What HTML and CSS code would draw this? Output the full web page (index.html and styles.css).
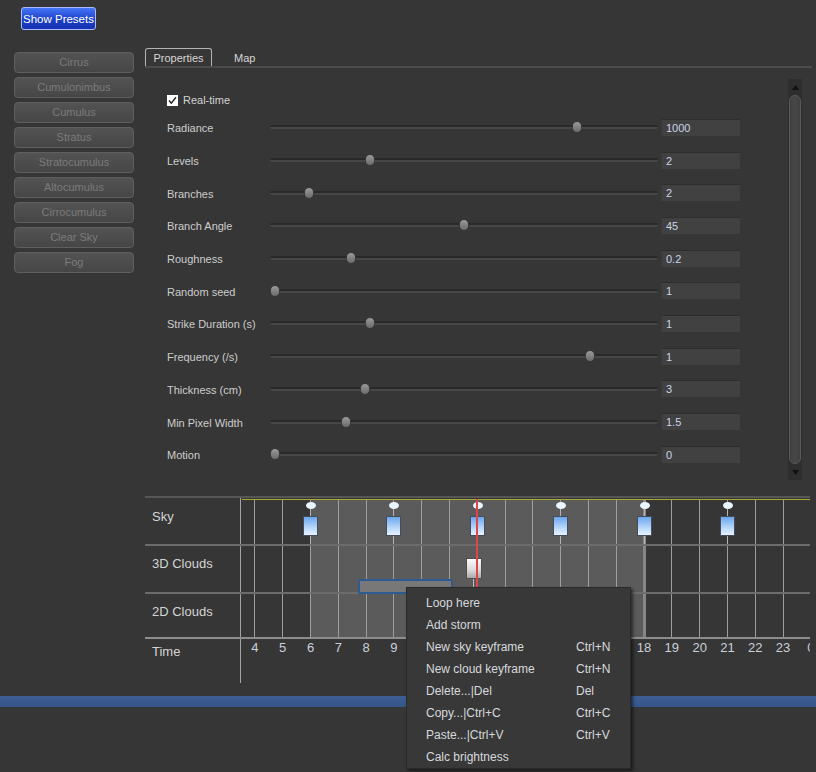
FILE: index.html
```html
<!DOCTYPE html>
<html>
<head>
<meta charset="utf-8">
<link rel="stylesheet" href="styles.css">
</head>
<body>
<div class="top"><button class="presets">Show Presets</button></div>
<div class="main">
  <div class="sidebar">
    <div class="preset">Cirrus</div>
    <div class="preset">Cumulonimbus</div>
    <div class="preset">Cumulus</div>
    <div class="preset">Stratus</div>
    <div class="preset">Stratocumulus</div>
    <div class="preset">Altocumulus</div>
    <div class="preset">Cirrocumulus</div>
    <div class="preset">Clear Sky</div>
    <div class="preset">Fog</div>
  </div>
  <div class="panel">
    <div class="tabs"><div class="tab active">Properties</div><div class="tab">Map</div></div>
    <div class="body">
      <div class="form">
        <div class="check-row"><span class="checkbox"><svg width="11" height="11" viewBox="0 0 11 11"><path d="M2 5.5 L4.3 8.2 L9 2.2" fill="none" stroke="#222" stroke-width="1.4"/></svg></span><span class="check-label">Real-time</span></div>
        <div class="row"><span class="label">Radiance</span><div class="slider"><div class="track"></div><div class="handle" style="left:302px"></div></div><div class="value">1000</div></div>
        <div class="row"><span class="label">Levels</span><div class="slider"><div class="track"></div><div class="handle" style="left:95px"></div></div><div class="value">2</div></div>
        <div class="row"><span class="label">Branches</span><div class="slider"><div class="track"></div><div class="handle" style="left:34px"></div></div><div class="value">2</div></div>
        <div class="row"><span class="label">Branch Angle</span><div class="slider"><div class="track"></div><div class="handle" style="left:189px"></div></div><div class="value">45</div></div>
        <div class="row"><span class="label">Roughness</span><div class="slider"><div class="track"></div><div class="handle" style="left:76px"></div></div><div class="value">0.2</div></div>
        <div class="row"><span class="label">Random seed</span><div class="slider"><div class="track"></div><div class="handle" style="left:0px"></div></div><div class="value">1</div></div>
        <div class="row"><span class="label">Strike Duration (s)</span><div class="slider"><div class="track"></div><div class="handle" style="left:95px"></div></div><div class="value">1</div></div>
        <div class="row"><span class="label">Frequency (/s)</span><div class="slider"><div class="track"></div><div class="handle" style="left:315px"></div></div><div class="value">1</div></div>
        <div class="row"><span class="label">Thickness (cm)</span><div class="slider"><div class="track"></div><div class="handle" style="left:90px"></div></div><div class="value">3</div></div>
        <div class="row"><span class="label">Min Pixel Width</span><div class="slider"><div class="track"></div><div class="handle" style="left:71px"></div></div><div class="value">1.5</div></div>
        <div class="row"><span class="label">Motion</span><div class="slider"><div class="track"></div><div class="handle" style="left:0px"></div></div><div class="value">0</div></div>
      </div>
      <div class="scrollbar">
        <div class="arrow"><svg width="7" height="5" viewBox="0 0 7 5"><path d="M0 5 L3.5 0 L7 5 Z" fill="#111"/></svg></div>
        <div class="thumb"></div>
        <div class="arrow"><svg width="7" height="5" viewBox="0 0 7 5"><path d="M0 0 L3.5 5 L7 0 Z" fill="#111"/></svg></div>
      </div>
    </div>
  </div>
</div>

<div class="timeline">
  <div class="layer back">
    <div class="shade"></div>
    <div class="yellow"></div>
    <div class="grid">
      <div class="gcell"></div><div class="gcell"></div><div class="gcell"></div><div class="gcell"></div><div class="gcell"></div>
      <div class="gcell"></div><div class="gcell"></div><div class="gcell"></div><div class="gcell"></div><div class="gcell"></div>
      <div class="gcell"></div><div class="gcell"></div><div class="gcell"></div><div class="gcell"></div><div class="gcell thick"></div>
      <div class="gcell"></div><div class="gcell"></div><div class="gcell"></div><div class="gcell"></div><div class="gcell"></div>
    </div>
  </div>
  <div class="tl-row sky"><div class="tl-label">Sky</div><div class="tl-track"></div></div>
  <div class="tl-row clouds3"><div class="tl-label">3D Clouds</div><div class="tl-track"></div></div>
  <div class="tl-row clouds2"><div class="tl-label">2D Clouds</div><div class="tl-track"></div></div>
  <div class="tl-row time"><div class="tl-label">Time</div>
    <div class="tl-track hours">
      <span>4</span><span>5</span><span>6</span><span>7</span><span>8</span><span>9</span><span>10</span><span>11</span><span>12</span><span>13</span>
      <span>14</span><span>15</span><span>16</span><span>17</span><span>18</span><span>19</span><span>20</span><span>21</span><span>22</span><span>23</span><span>0</span>
    </div>
  </div>
  <div class="layer front">
    <div class="kf" style="left:62px"><div class="stem"></div><div class="dot"></div><div class="kbox"></div></div>
    <div class="kf" style="left:145px"><div class="stem"></div><div class="dot"></div><div class="kbox"></div></div>
    <div class="kf" style="left:229px"><div class="stem"></div><div class="dot"></div><div class="kbox"></div></div>
    <div class="kf" style="left:312px"><div class="stem"></div><div class="dot"></div><div class="kbox"></div></div>
    <div class="kf" style="left:396px"><div class="stem"></div><div class="dot"></div><div class="kbox"></div></div>
    <div class="kf" style="left:479px"><div class="stem"></div><div class="dot"></div><div class="kbox"></div></div>
    <div class="selection"></div>
    <div class="cloudkf"><div class="cstem"></div></div>
    <div class="redline"></div>
  </div>
</div>
<div class="bluebar"></div>

<div class="menu">
  <div class="item"><span>Loop here</span><span></span></div>
  <div class="item"><span>Add storm</span><span></span></div>
  <div class="item"><span>New sky keyframe</span><span>Ctrl+N</span></div>
  <div class="item"><span>New cloud keyframe</span><span>Ctrl+N</span></div>
  <div class="item"><span>Delete...|Del</span><span>Del</span></div>
  <div class="item"><span>Copy...|Ctrl+C</span><span>Ctrl+C</span></div>
  <div class="item"><span>Paste...|Ctrl+V</span><span>Ctrl+V</span></div>
  <div class="item"><span>Calc brightness</span><span></span></div>
</div>
</body>
</html>
```

FILE: styles.css
```css
* { box-sizing: border-box; }
html, body { margin: 0; padding: 0; }
body {
  width: 816px;
  height: 772px;
  overflow: hidden;
  position: relative;
  background: #363636;
  font-family: "Liberation Sans", Arial, sans-serif;
  color: #cfcfcf;
}

.top { height: 48px; padding: 7px 0 0 21px; }
.presets {
  display: block;
  width: 75px;
  height: 23px;
  padding: 0;
  border: 1px solid #a9bcff;
  border-radius: 3px;
  background: linear-gradient(#4476f8, #1d3fc8 55%, #1533b0);
  color: #fff;
  font-family: "Liberation Sans", Arial, sans-serif;
  font-size: 11.5px;
}

.main { display: flex; height: 448px; }
.sidebar {
  margin: 4px 0 0 14px;
  width: 120px;
  display: flex;
  flex-direction: column;
  gap: 4px;
}
.preset {
  height: 21px;
  border: 1px solid #5f5f5f;
  border-radius: 4px;
  background: linear-gradient(#535353, #464646);
  color: #7b7b7b;
  font-size: 11px;
  line-height: 19px;
  text-align: center;
}

.panel { margin-left: 11px; width: 667px; display: flex; flex-direction: column; }
.tabs { display: flex; height: 20px; border-bottom: 2px solid #4b4b4b; }
.tab { font-size: 11px; color: #d6d6d6; line-height: 17px; padding: 2px 22px 0; }
.tab.active {
  width: 67px;
  height: 18px;
  padding: 1px 0 0;
  text-align: center;
  border: 1px solid #b4b4b4;
  border-bottom: none;
  border-radius: 3px 3px 0 0;
}

.body { display: flex; flex: 1; }
.form { width: 643px; padding: 20px 0 0 22px; }
.check-row { height: 24px; display: flex; align-items: center; }
.checkbox {
  width: 11px; height: 11px;
  background: #fff;
  display: flex;
  margin-right: 5px;
}
.check-label { font-size: 11px; color: #d2d2d2; }
.row { height: 32.7px; display: flex; align-items: center; }
.label { width: 103px; flex: none; font-size: 11px; color: #cdcdcd; }
.slider { position: relative; flex: none; width: 388px; height: 14px; margin-right: 3px; margin-top: -2px; }
.track {
  position: absolute; left: 0; right: 0; top: 5px;
  height: 4px;
  border-radius: 2px;
  border-top: 2px solid #292929;
  background: #474747;
}
.handle {
  position: absolute; top: 1px;
  width: 10px; height: 12px;
  border-radius: 5px;
  border: 1px solid #3a3a3a;
  background: linear-gradient(#9a9a9a, #6a6a6a);
}
.value {
  width: 79px; height: 17px;
  flex: none;
  background: #414141;
  border-top: 1px solid #2e2e2e;
  border-left: 1px solid #393939;
  font-size: 11px;
  line-height: 16px;
  padding-left: 4px;
  color: #cbd5e8;
  margin-top: -2px;
}

.scrollbar {
  margin-top: 11px;
  width: 14px;
  height: 401px;
  display: flex;
  flex-direction: column;
  background: #2e2e2e;
}
.arrow { height: 16px; display: flex; justify-content: center; align-items: center; }
.thumb {
  flex: 1;
  margin: 0 1px;
  border: 1px solid #5a5a5a;
  border-radius: 6px;
  background: linear-gradient(90deg, #3f3f3f, #474747, #3f3f3f);
}

.timeline {
  position: relative;
  margin-left: 145px;
  width: 665px;
  border-top: 2px solid #575757;
  overflow: hidden;
}
.layer { position: absolute; left: 96px; top: 0; width: 569px; height: 141px; overflow: hidden; }
.back { z-index: 0; }
.front { z-index: 2; }
.shade { position: absolute; left: 69px; top: 1px; width: 334px; height: 140px; background: #5b5b5b; }
.yellow { position: absolute; left: 1px; right: 0; top: 1px; height: 1px; background: #a9a932; }
.grid { display: flex; position: absolute; left: 0; top: 2px; bottom: 0; }
.gcell { width: 27.8px; flex: none; position: relative; }
.gcell::before {
  content: "";
  position: absolute;
  left: 13.4px; top: 0; bottom: 0;
  width: 1px;
  background: #9e9e9e;
}
.gcell.thick::before { left: 12.4px; width: 3px; background: #878787; }

.tl-row { position: relative; z-index: 1; display: flex; }
.tl-label {
  flex: none;
  width: 96px;
  border-right: 1px solid #a3a3a3;
  padding-left: 7px;
  font-size: 13px;
  line-height: 16px;
  color: #d4d4d4;
}
.tl-track { flex: 1; min-width: 0; overflow: hidden; }
.sky { height: 48px; border-bottom: 2px solid #6c6c6c; }
.sky .tl-label { padding-top: 11px; }
.clouds3 { height: 48px; border-bottom: 2px solid #6c6c6c; }
.clouds3 .tl-label { padding-top: 10px; }
.clouds2 { height: 45px; border-bottom: 2px solid #8d8d8d; }
.clouds2 .tl-label { padding-top: 10px; }
.time { height: 44px; }
.time .tl-label { padding-top: 5px; }
.hours { display: flex; padding-top: 1px; }
.hours span {
  flex: none;
  width: 27.8px;
  text-align: center;
  font-size: 13px;
  line-height: 16px;
  color: #c9d0dc;
}

.kf { position: absolute; top: 0; width: 15px; height: 46px; }
.stem { position: absolute; left: 7px; top: 8px; bottom: 0; width: 1px; background: #b4b4b4; }
.dot {
  position: absolute; left: 2.5px; top: 4px;
  width: 10px; height: 7px;
  border-radius: 50%;
  background: #eaf6ff;
}
.kbox {
  position: absolute; left: 0; top: 18px;
  width: 15px; height: 20px;
  border: 1px solid #454b58;
  background: linear-gradient(#6aa6ee, #b8d8fa 60%, #e6f2ff);
}
.cloudkf {
  position: absolute; left: 225px; top: 60px;
  width: 16px; height: 21px;
  border: 1px solid #4e4e4e;
  background: linear-gradient(#fbfbfb, #d8d8d8 60%, #a9a9a9);
}
.cstem { position: absolute; left: 6px; top: 20px; width: 1px; height: 14px; background: #bdbdbd; }
.redline { position: absolute; left: 235px; top: 1px; width: 2px; height: 140px; background: #e04646; }
.selection {
  position: absolute; left: 117px; top: 81px;
  width: 95px; height: 15px;
  border: 2px solid #2e5a94;
  border-radius: 2px;
  background: #787878;
}

.bluebar {
  margin-top: 13px;
  height: 11px;
  background: linear-gradient(#3e5f94, #36558a);
}

.menu {
  position: absolute;
  left: 406px; top: 587px;
  width: 225px; height: 182px;
  padding-top: 4px;
  background: #383838;
  border: 1px solid #2a2a2a;
  box-shadow: 2px 2px 3px rgba(0,0,0,0.55);
  z-index: 5;
}
.item {
  height: 22px;
  display: flex;
  align-items: center;
  padding-left: 19px;
  font-size: 12px;
  color: #d7d8de;
}
.item span:first-child { width: 150px; }
```
